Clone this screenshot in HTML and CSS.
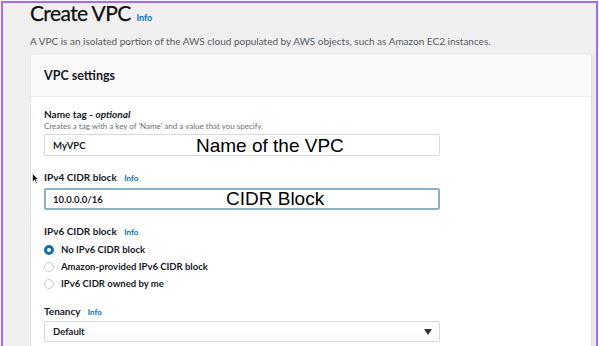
FILE: index.html
```html
<!DOCTYPE html>
<html lang="en">
<head>
<meta charset="utf-8">
<title>Create VPC</title>
<link rel="stylesheet" href="styles.css">
</head>
<body>
<div class="frame">
  <header class="page-head">
    <h1 class="title">Create VPC <span class="info info-title">Info</span></h1>
    <p class="lead">A VPC is an isolated portion of the AWS cloud populated by AWS objects, such as Amazon EC2 instances.</p>
  </header>
  <section class="card">
    <div class="card-head"><h2 class="card-title">VPC settings</h2></div>
    <div class="card-body">
      <div class="field">
        <div class="label">Name tag - <i>optional</i></div>
        <div class="hint">Creates a tag with a key of 'Name' and a value that you specify.</div>
        <div class="input-wrap">
          <div class="input">MyVPC</div>
          <span class="note note-name">Name of the VPC</span>
        </div>
      </div>
      <div class="field">
        <div class="label">IPv4 CIDR block <span class="info">Info</span></div>
        <div class="input-wrap">
          <div class="input input-focus">10.0.0.0/16</div>
          <span class="note note-cidr">CIDR Block</span>
          <svg class="cursor" width="7" height="11" viewBox="0 0 7 11"><path d="M0.5 0.5 L0.5 9 L2.6 7 L4 10.4 L5.2 9.9 L3.8 6.6 L6.5 6.6 Z" fill="#111" stroke="#fff" stroke-width="0.6"/></svg>
        </div>
      </div>
      <div class="field">
        <div class="label">IPv6 CIDR block <span class="info">Info</span></div>
        <div class="radios">
          <div class="radio-row"><span class="radio radio-on"></span>No IPv6 CIDR block</div>
          <div class="radio-row"><span class="radio"></span>Amazon-provided IPv6 CIDR block</div>
          <div class="radio-row"><span class="radio"></span>IPv6 CIDR owned by me</div>
        </div>
      </div>
      <div class="field field-tenancy">
        <div class="label">Tenancy <span class="info">Info</span></div>
        <div class="input select">Default <span class="caret"></span></div>
      </div>
    </div>
  </section>
</div>
</body>
</html>
```
FILE: styles.css
```css
* { box-sizing: border-box; }
html, body {
  margin: 0;
  height: 346px;
  overflow: hidden;
  background: #f4f4f4;
}
body {
  font-family: Lato, "Open Sans", sans-serif;
  color: #16191f;
}
.frame {
  margin: 1px 0 0 1px;
  width: 597px;
  height: 345px;
  overflow: hidden;
  border: 2px solid #a36cf4;
  border-bottom: none;
  background: #f0f0f0;
  padding: 0 5px 0 27px;
}
.page-head {
  height: 53px;
}
.title {
  margin: 0;
  font-weight: 400;
  font-size: 21px;
  line-height: 22px;
  margin-top: -1px;
  color: #111;
  letter-spacing: -0.6px;
  -webkit-text-stroke: 0.25px #111;
}
.info {
  color: #0073bb;
  font-weight: 700;
  font-size: 8px;
  letter-spacing: 0;
  margin-left: 5px;
  -webkit-text-stroke: 0;
}
.info-title {
  font-size: 9px;
  margin-left: 1px;
}
.lead {
  margin: 6px 0 0 0;
  font-size: 10px;
  line-height: 12px;
  color: #545b64;
}
.card {
  background: #fff;
  border-left: 1px solid #e6e6e6;
  box-shadow: 1px 0 0 #dedede, 3px 0 3px rgba(0,0,0,0.05);
  height: 300px;
}
.card-head {
  height: 42px;
  background: #fafafb;
  border-bottom: 1px solid #eaeded;
  padding: 0 13px;
  display: flex;
  align-items: center;
}
.card-title {
  margin: 0;
  font-size: 12.5px;
  font-weight: 700;
  color: #16191f;
}
.card-body {
  padding: 10px 13px 0 13px;
}
.field + .field { margin-top: 14px; }
.field + .field-tenancy { margin-top: 12px; }
.label {
  font-size: 10px;
  font-weight: 700;
  line-height: 14px;
  color: #16191f;
}
.label i { font-weight: 700; }
.hint {
  font-size: 8px;
  line-height: 11px;
  color: #687078;
  margin-bottom: 2px;
}
.input-wrap {
  position: relative;
  margin-top: 3px;
}
.field .hint + .input-wrap { margin-top: 0; }
.input {
  width: 396px;
  height: 22px;
  border: 1px solid #d5dbdb;
  border-radius: 2px;
  background: #fff;
  font-size: 9.5px;
  font-weight: 700;
  color: #16191f;
  padding: 0 8px;
  display: flex;
  align-items: center;
}
.input-focus {
  border: 2px solid #8db3c2;
  padding: 0 7px;
}
.note {
  position: absolute;
  top: 2px;
  font-family: "Liberation Sans", Arial, sans-serif;
  font-size: 19px;
  line-height: 20px;
  color: #000;
}
.note-name { left: 152px; }
.note-cidr { left: 182px; top: 1px; }
.cursor {
  position: absolute;
  left: -12px;
  top: -15px;
}
.radios {
  margin-top: 2px;
}
.radio-row {
  height: 17px;
  display: flex;
  align-items: center;
  font-size: 9.5px;
  font-weight: 700;
  color: #16191f;
}
.radio {
  width: 10px;
  height: 10px;
  border-radius: 50%;
  border: 1px solid #c9cfd2;
  background: #fff;
  margin: 0 7px 0 0;
}
.radio-on {
  border: 3px solid #0e6fae;
}
.select {
  margin-top: 2px;
  height: 21px;
  justify-content: space-between;
  background: linear-gradient(#fff, #fbfbfb);
}
.caret {
  width: 0;
  height: 0;
  border-left: 4px solid transparent;
  border-right: 4px solid transparent;
  border-top: 6px solid #333;
  margin-right: -1px;
}
```
